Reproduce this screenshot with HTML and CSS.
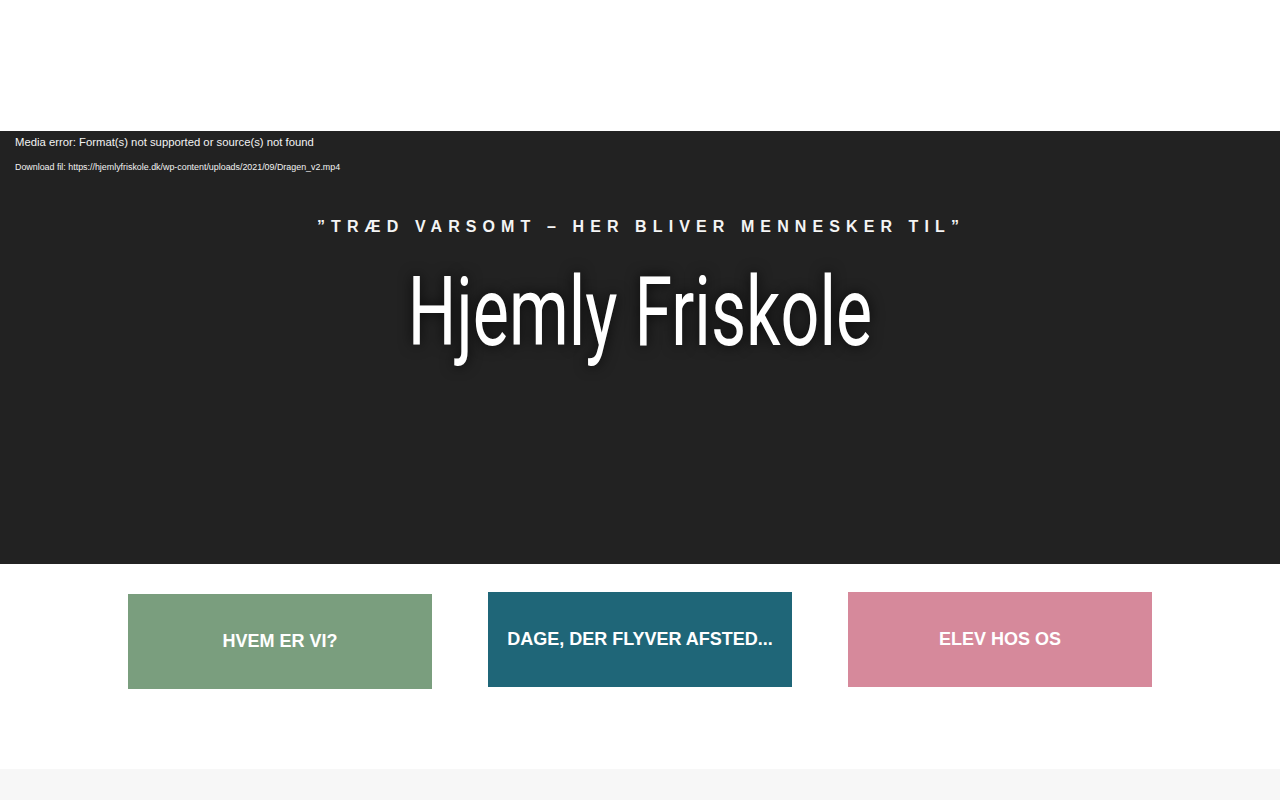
FILE: index.html
```html
<!DOCTYPE html>
<html lang="da">
<head>
<meta charset="utf-8">
<title>Hjemly Friskole</title>
<link rel="stylesheet" href="styles.css">
</head>
<body>
<header class="topbar"></header>
<section class="hero">
  <div class="media-error">
    <p class="err">Media error: Format(s) not supported or source(s) not found</p>
    <p class="dl">Download fil: <a href="#">https://hjemlyfriskole.dk/wp-content/uploads/2021/09/Dragen_v2.mp4</a></p>
  </div>
  <div class="hero-text">
    <p class="tagline">”TRÆD VARSOMT – HER BLIVER MENNESKER TIL”</p>
    <h1 class="title"><span class="title-inner">Hjemly Friskole</span></h1>
  </div>
</section>
<section class="cards">
  <a class="card card-green" href="#">HVEM ER VI?</a>
  <a class="card card-teal" href="#">DAGE, DER FLYVER AFSTED...</a>
  <a class="card card-pink" href="#">ELEV HOS OS</a>
</section>
<footer class="foot"></footer>
</body>
</html>
```
FILE: styles.css
```css
* { box-sizing: border-box; }
html, body { margin: 0; padding: 0; }
body { background: #fff; font-family: "Liberation Sans", Arial, sans-serif; }

.topbar { height: 131px; background: #fff; }

.hero {
  height: 433px;
  background: #222222;
  display: flex;
  flex-direction: column;
  color: #fff;
}
.media-error { padding: 4px 15px 0; }
.media-error p { margin: 0; }
.err { font-size: 11.3px; line-height: 14px; color: #f2f2f2; }
.dl { font-size: 8.9px; line-height: 10px; margin-top: 13px !important; color: #f2f2f2; }
.dl a { color: #f2f2f2; text-decoration: none; }

.hero-text { text-align: center; padding-top: 45px; }
.tagline {
  margin: 0;
  font-family: "Liberation Sans", Arial, sans-serif;
  font-weight: 700;
  font-size: 16px;
  line-height: 20px;
  letter-spacing: 6.1px;
  color: #f4f4f4;
  padding-left: 2px;
}
.title {
  margin: 25px 0 0;
  font-family: "Roboto", sans-serif;
  font-weight: 400;
  font-size: 96px;
  line-height: 100px;
  color: #fff;
  text-shadow: 0 0 16px rgba(0,0,0,0.8);
}
.title-inner {
  display: inline-block;
  transform: scaleX(0.71);
  transform-origin: center;
}

.cards {
  display: flex;
  justify-content: center;
  align-items: flex-start;
  gap: 56px;
  padding-top: 28px;
  height: 205px;
}
.card {
  width: 304px;
  height: 95px;
  display: flex;
  align-items: center;
  justify-content: center;
  color: #fff;
  text-decoration: none;
  font-weight: 700;
  font-size: 18px;
}
.card-green { background: #7a9e7e; margin-top: 2px; }
.card-teal { background: #1f6678; }
.card-pink { background: #d6899b; }

.foot { height: 31px; background: #f7f7f7; }
```
